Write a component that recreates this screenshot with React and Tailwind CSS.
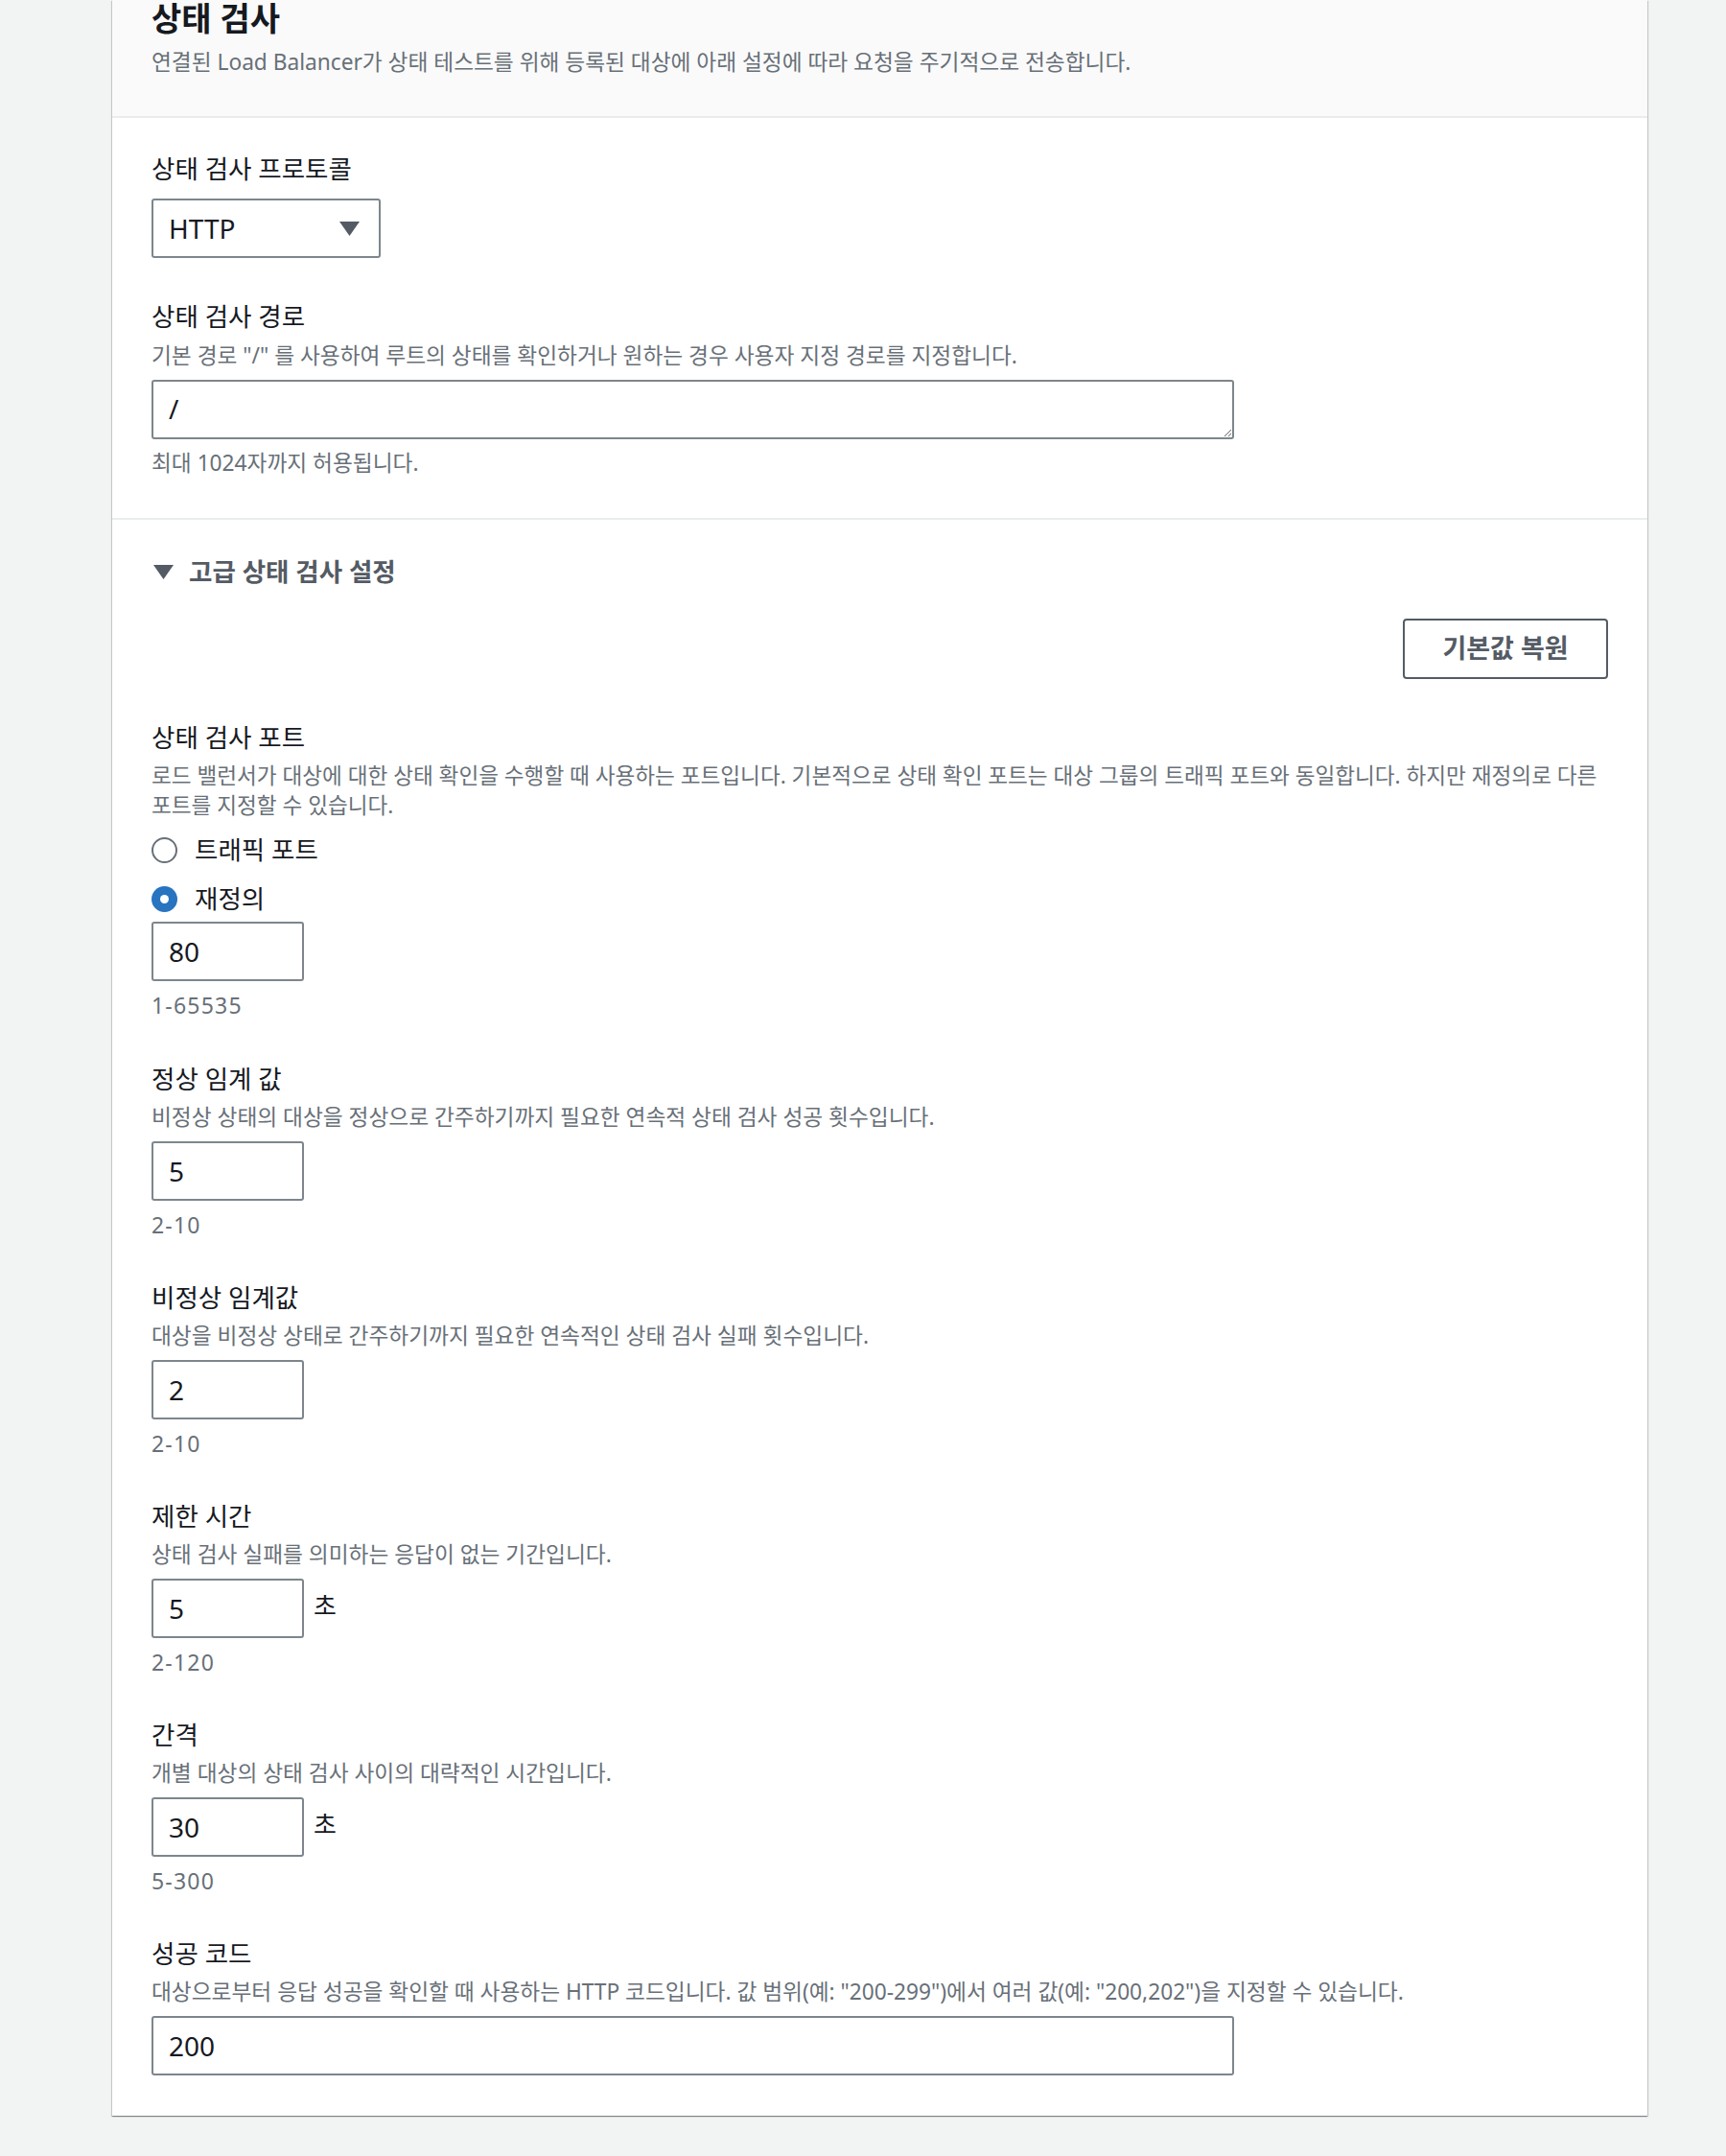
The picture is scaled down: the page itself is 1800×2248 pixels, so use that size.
import React from "react";

function Caret({ className }) {
  return (
    <svg className={className} width="21" height="15" viewBox="0 0 21 15">
      <polygon points="0,0 21,0 10.5,15" fill="#545b64" />
    </svg>
  );
}

function Field({ label, desc, hint, children, className = "" }) {
  return (
    <div className={className}>
      <div className="text-[26.5px] leading-[31px] text-[#16191f]">{label}</div>
      {desc && (
        <div className="mt-[8px] text-[22.7px] leading-[31px] text-[#687078]">{desc}</div>
      )}
      <div className="mt-[10px]">{children}</div>
      {hint && (
        <div className="mt-[10px] text-[23px] leading-[31px] tracking-[1.2px] text-[#687078]">{hint}</div>
      )}
    </div>
  );
}

function NumInput({ value, unit }) {
  return (
    <div className="flex items-start">
      <div className="w-[159px] h-[62px] border-2 border-[#7d868c] rounded-[3px] bg-white flex items-center pl-[16px] text-[28px] text-[#16191f]">
        {value}
      </div>
      {unit && (
        <span className="ml-[10px] mt-[13px] text-[26px] leading-[31px] text-[#16191f]">{unit}</span>
      )}
    </div>
  );
}

export default function App() {
  return (
    <div className="h-[2248px] overflow-hidden bg-[#f2f3f3] font-['Noto_Sans','Noto_Sans_CJK_KR',sans-serif]">
      <div className="ml-[117px] w-[1601px] bg-white shadow-[0_1px_1px_0_rgba(0,28,36,0.3),1px_1px_1px_0_rgba(0,28,36,0.15),-1px_1px_1px_0_rgba(0,28,36,0.15)]">
        {/* Header */}
        <div className="bg-[#fafafa] px-[41px] pt-[1px] pb-[41px] border-b-2 border-[#eaeded]">
          <h2 className="text-[34px] leading-[36px] font-bold text-[#16191f]">상태 검사</h2>
          <p className="mt-[12px] text-[22.7px] leading-[31px] text-[#687078]">
            연결된 Load Balancer가 상태 테스트를 위해 등록된 대상에 아래 설정에 따라 요청을 주기적으로 전송합니다.
          </p>
        </div>

        {/* Section 1 */}
        <div className="px-[41px] pt-[38px] pb-[42px] border-b-2 border-[#eaeded]">
          <div className="text-[26.5px] leading-[31px] text-[#16191f]">상태 검사 프로토콜</div>
          <div className="mt-[15px] w-[239px] h-[62px] border-2 border-[#7d868c] rounded-[3px] flex items-center justify-between pl-[16px] pr-[20px]">
            <span className="text-[28px] text-[#16191f]">HTTP</span>
            <Caret />
          </div>

          <div className="mt-[46px] text-[26.5px] leading-[31px] text-[#16191f]">상태 검사 경로</div>
          <div className="mt-[9px] text-[22.7px] leading-[31px] text-[#687078]">
            기본 경로 "/" 를 사용하여 루트의 상태를 확인하거나 원하는 경우 사용자 지정 경로를 지정합니다.
          </div>
          <textarea
            readOnly
            defaultValue="/"
            rows={1}
            className="mt-[10px] block w-[1129px] h-[62px] border-2 border-[#7d868c] rounded-[3px] pl-[16px] pt-[10px] text-[28px] leading-[36px] text-[#16191f] outline-none font-['Noto_Sans','Noto_Sans_CJK_KR',sans-serif]"
          />
          <div className="mt-[9px] text-[22.7px] leading-[31px] text-[#687078]">최대 1024자까지 허용됩니다.</div>
        </div>

        {/* Section 2 */}
        <div className="px-[41px] pt-[39px] pb-[42px]">
          <div className="flex items-center gap-[16px] text-[26.5px] leading-[31px] font-bold text-[#545b64]">
            <Caret className="ml-[2px]" />
            <span>고급 상태 검사 설정</span>
          </div>

          <div className="mt-[33px] flex justify-end">
            <button className="w-[214px] h-[63px] border-2 border-[#545b64] rounded-[4px] bg-white text-[27px] font-bold text-[#545b64]">
              기본값 복원
            </button>
          </div>

          <div className="mt-[46px]">
            <div className="text-[26.5px] leading-[31px] text-[#16191f]">상태 검사 포트</div>
            <div className="mt-[8px] text-[22.6px] leading-[31px] text-[#687078]">
              <span className="whitespace-nowrap">로드 밸런서가 대상에 대한 상태 확인을 수행할 때 사용하는 포트입니다. 기본적으로 상태 확인 포트는 대상 그룹의 트래픽 포트와 동일합니다. 하지만 재정의로 다른</span>
              <br />
              포트를 지정할 수 있습니다.
            </div>
            <div className="mt-[16px] flex items-center gap-[18px] h-[31px]">
              <span className="w-[27px] h-[27px] rounded-full border-2 border-[#687078] bg-white"></span>
              <span className="text-[26.5px] leading-[31px] text-[#16191f]">트래픽 포트</span>
            </div>
            <div className="mt-[20px] flex items-center gap-[18px] h-[31px]">
              <span className="w-[27px] h-[27px] rounded-full bg-[#2874c0] flex items-center justify-center">
                <span className="w-[9px] h-[9px] rounded-full bg-white"></span>
              </span>
              <span className="text-[26.5px] leading-[31px] text-[#16191f]">재정의</span>
            </div>
            <div className="mt-[8px]">
              <NumInput value="80" />
            </div>
            <div className="mt-[10px] text-[23px] leading-[31px] tracking-[1.2px] text-[#687078]">1-65535</div>
          </div>

          <Field
            className="mt-[46px]"
            label="정상 임계 값"
            desc="비정상 상태의 대상을 정상으로 간주하기까지 필요한 연속적 상태 검사 성공 횟수입니다."
            hint="2-10"
          >
            <NumInput value="5" />
          </Field>

          <Field
            className="mt-[45px]"
            label="비정상 임계값"
            desc="대상을 비정상 상태로 간주하기까지 필요한 연속적인 상태 검사 실패 횟수입니다."
            hint="2-10"
          >
            <NumInput value="2" />
          </Field>

          <Field
            className="mt-[45px]"
            label="제한 시간"
            desc="상태 검사 실패를 의미하는 응답이 없는 기간입니다."
            hint="2-120"
          >
            <NumInput value="5" unit="초" />
          </Field>

          <Field
            className="mt-[45px]"
            label="간격"
            desc="개별 대상의 상태 검사 사이의 대략적인 시간입니다."
            hint="5-300"
          >
            <NumInput value="30" unit="초" />
          </Field>

          <Field
            className="mt-[45px]"
            label="성공 코드"
            desc={'대상으로부터 응답 성공을 확인할 때 사용하는 HTTP 코드입니다. 값 범위(예: "200-299")에서 여러 값(예: "200,202")을 지정할 수 있습니다.'}
          >
            <div className="w-[1129px] h-[62px] border-2 border-[#7d868c] rounded-[3px] flex items-center pl-[16px] text-[28px] text-[#16191f]">
              200
            </div>
          </Field>
        </div>
      </div>

      <div className="mt-[42px] ml-[117px] w-[1601px] h-[60px] bg-white shadow-[0_1px_1px_0_rgba(0,28,36,0.3),1px_1px_1px_0_rgba(0,28,36,0.15),-1px_1px_1px_0_rgba(0,28,36,0.15)]"></div>
    </div>
  );
}
